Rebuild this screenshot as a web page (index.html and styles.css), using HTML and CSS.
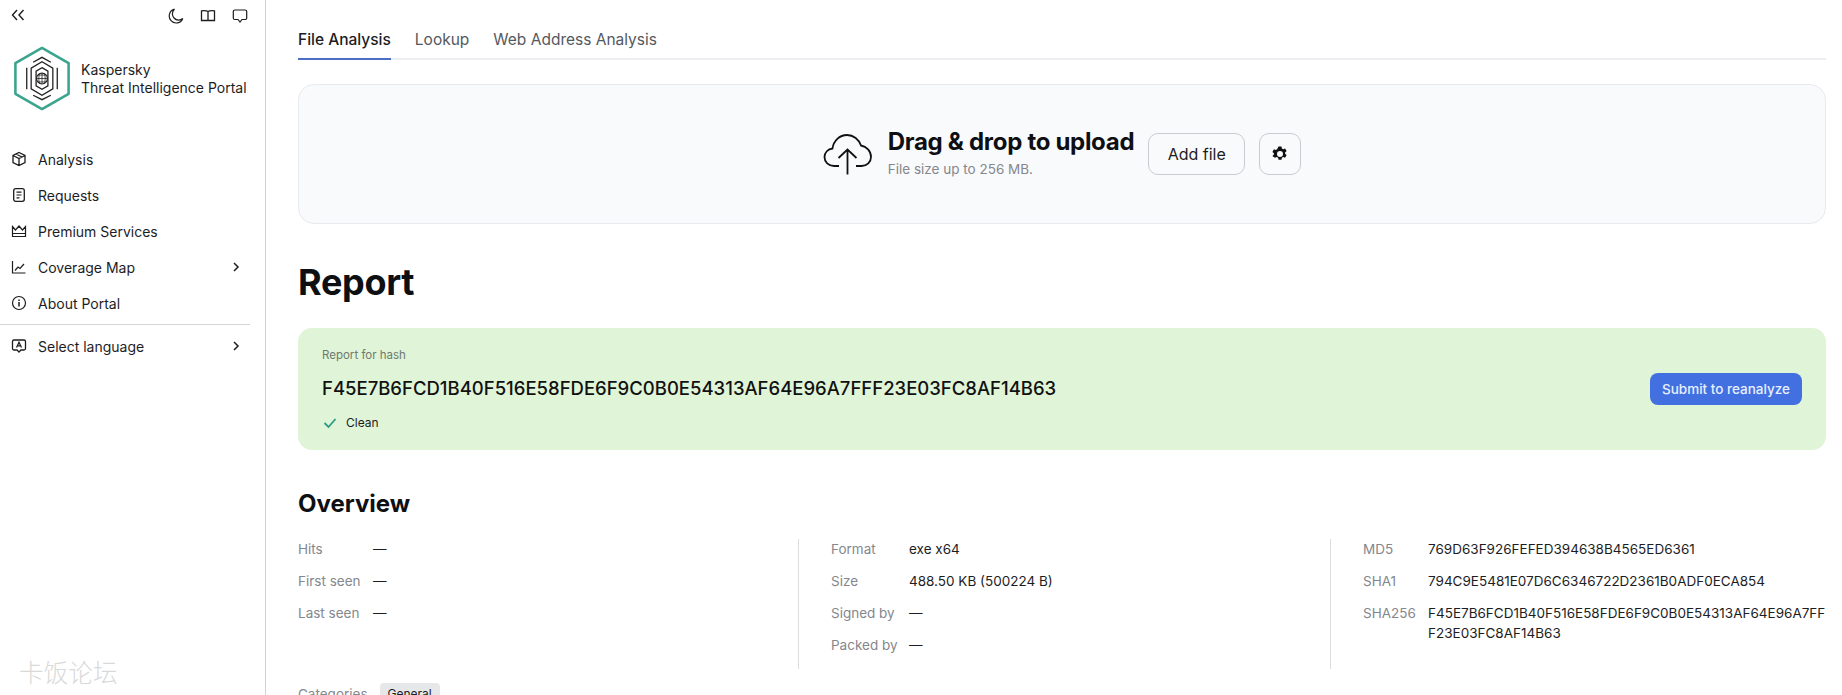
FILE: index.html
```html
<!DOCTYPE html>
<html lang="en">
<head>
<meta charset="utf-8">
<title>Kaspersky Threat Intelligence Portal</title>
<link rel="stylesheet" href="styles.css">
</head>
<body>
<div class="app">
  <aside class="sidebar">
    <div class="topbar">
      <svg class="collapse" viewBox="0 0 14 12" width="14" height="12"><path d="M6 1 1.5 6 6 11M12.5 1 8 6l4.500 5" fill="none" stroke="#1d1d1f" stroke-width="1.400"/></svg>
      <div class="top-icons">
        <svg viewBox="0 0 16 16" width="16" height="16"><path d="M6.500 1.200A7 7 0 1 0 14.800 10.500 6 6 0 0 1 6.500 1.200Z" fill="none" stroke="#1d1d1f" stroke-width="1.200"/></svg>
        <svg viewBox="0 0 16 16" width="16" height="16"><path d="M8 3.500C6.500 2.600 4 2.500 1.500 2.800V12.500H14.500V2.800C12 2.500 9.500 2.600 8 3.500ZM8 3.500V12.500" fill="none" stroke="#1d1d1f" stroke-width="1.300"/></svg>
        <svg viewBox="0 0 16 16" width="16" height="16"><path d="M2.800 2H13.200A1.500 1.500 0 0 1 14.700 3.500V10A1.500 1.500 0 0 1 13.200 11.500H10L8 14 6 11.500H2.800A1.500 1.500 0 0 1 1.300 10V3.500A1.500 1.500 0 0 1 2.800 2Z" fill="none" stroke="#1d1d1f" stroke-width="1.200"/></svg>
      </div>
    </div>
    <div class="brand">
      <svg class="logo" viewBox="0 0 60 66" width="60" height="65">
        <path d="M30 2 57 17.500V48.500L30 64 3 48.500V17.500Z" fill="none" stroke="#3aa48f" stroke-width="2.600" stroke-linejoin="round"/>
        <path d="M21 16.500 30 11.500 39 16.500M45.500 22V44M39 50 30 54.500 21 50M14.500 44V22" fill="none" stroke="#222" stroke-width="1.300"/>
        <path d="M30 16 41 22.500V43.500L30 50 19 43.500V22.500Z" fill="none" stroke="#222" stroke-width="1.300"/>
        <path d="M30 22 36 25.500V40.500L30 44 24 40.500V25.500Z" fill="none" stroke="#222" stroke-width="1.300"/>
        <circle cx="30" cy="33" r="5.500" fill="none" stroke="#222" stroke-width="1.100"/>
        <path d="M24.500 33H35.500M30 27.500V38.500M26 29.500H34M26 36.500H34M27.500 28C26.500 31 26.500 35 27.500 38M32.500 28C33.500 31 33.500 35 32.500 38" fill="none" stroke="#222" stroke-width=".8"/>
      </svg>
      <div class="brand-text"><div>Kaspersky</div><div>Threat Intelligence Portal</div></div>
    </div>
    <nav class="nav">
      <a class="nav-item">
        <svg viewBox="0 0 16 16" width="16" height="16"><path d="M8 1.500 14 4.500V11.500L8 14.500 2 11.500V4.500ZM2 4.500 8 7.500 14 4.500M8 7.500V14.500M5 3 11 6" fill="none" stroke="#1d1d1f" stroke-width="1.300"/></svg>
        <span>Analysis</span>
      </a>
      <a class="nav-item">
        <svg viewBox="0 0 16 16" width="16" height="16"><rect x="2.700" y="1.700" width="10.600" height="12.600" rx="2" fill="none" stroke="#1d1d1f" stroke-width="1.300"/><path d="M5.500 5.200H10.500M5.500 8H10.500M5.500 10.800H8.500" stroke="#1d1d1f" stroke-width="1.200"/></svg>
        <span>Requests</span>
      </a>
      <a class="nav-item">
        <svg viewBox="0 0 16 16" width="16" height="16"><path d="M1.500 3.500 4.500 7 8 3 11.500 7 14.500 3.500V13.500H1.500ZM1.500 10.500H14.500" fill="none" stroke="#1d1d1f" stroke-width="1.200"/></svg>
        <span>Premium Services</span>
      </a>
      <a class="nav-item">
        <svg viewBox="0 0 16 16" width="16" height="16"><path d="M1.500 2V14H14.500M4 11.500 7 8l2 1.500 4-4.500" fill="none" stroke="#1d1d1f" stroke-width="1.200"/></svg>
        <span>Coverage Map</span>
        <svg class="chev" viewBox="0 0 8 12" width="8" height="12"><path d="M2 2 6 6 2 10" fill="none" stroke="#1d1d1f" stroke-width="1.500"/></svg>
      </a>
      <a class="nav-item">
        <svg viewBox="0 0 16 16" width="16" height="16"><circle cx="8" cy="8" r="6.500" fill="none" stroke="#1d1d1f" stroke-width="1.200"/><path d="M8 7V11.500M8 4.500V6" stroke="#1d1d1f" stroke-width="1.500"/></svg>
        <span>About Portal</span>
      </a>
      <div class="nav-sep"></div>
      <a class="nav-item">
        <svg viewBox="0 0 16 16" width="16" height="16"><path d="M3 2H13A1.500 1.500 0 0 1 14.500 3.500V10.500A1.500 1.500 0 0 1 13 12H10L8 14 6 12H3A1.500 1.500 0 0 1 1.500 10.500V3.500A1.500 1.500 0 0 1 3 2Z" fill="none" stroke="#1d1d1f" stroke-width="1.300"/><path d="M5.500 9.500 8 4.200 10.500 9.500M6.500 7.800H9.500" fill="none" stroke="#1d1d1f" stroke-width="1.200"/></svg>
        <span>Select language</span>
        <svg class="chev" viewBox="0 0 8 12" width="8" height="12"><path d="M2 2 6 6 2 10" fill="none" stroke="#1d1d1f" stroke-width="1.500"/></svg>
      </a>
    </nav>
    <div class="watermark">卡饭论坛</div>
  </aside>
  <main class="main">
    <div class="tabs">
      <a class="tab tab-active">File Analysis</a>
      <a class="tab">Lookup</a>
      <a class="tab">Web Address Analysis</a>
    </div>
    <section class="dropzone">
      <svg class="cloud" viewBox="0 0 50 42" width="50" height="42"><path d="M16 33H11C5.500 33 1.500 29 1.500 24C1.500 19.500 5 16 9.500 15.500C10.500 8 16.500 2 24 2C30.500 2 36 6.500 38 12.500C43.500 13.500 48 18 48 24C48 29 44 33 38.500 33H33M24.500 41.500V17M15.500 25 24.500 16.500 33.500 25" fill="none" stroke="#111" stroke-width="1.800"/></svg>
      <div class="drop-text">
        <div class="drop-title">Drag &amp; drop to upload</div>
        <div class="drop-sub">File size up to 256 MB.</div>
      </div>
      <button class="btn-outline">Add file</button>
      <button class="btn-outline btn-icon">
        <svg viewBox="0 0 16 16" width="16" height="16"><path fill-rule="evenodd" d="M6.500.5h3l.4 2 1.300.7 1.900-.7 1.500 2.600-1.500 1.300v1.400l1.500 1.300-1.500 2.600-1.900-.7-1.300.7-.4 2h-3l-.4-2-1.300-.7-1.900.7L.4 9.900l1.500-1.300V7.200L.4 5.900l1.500-2.600 1.900.7 1.300-.7ZM8 5a3 3 0 1 0 0 6 3 3 0 0 0 0-6Z" fill="#111"/></svg>
      </button>
    </section>
    <h1 class="report-title">Report</h1>
    <section class="verdict">
      <div class="verdict-info">
        <div class="verdict-label">Report for hash</div>
        <div class="verdict-hash">F45E7B6FCD1B40F516E58FDE6F9C0B0E54313AF64E96A7FFF23E03FC8AF14B63</div>
        <div class="verdict-status">
          <svg viewBox="0 0 14 12" width="14" height="12"><path d="M1.500 6 5.500 10 12.500 2" fill="none" stroke="#2a9d80" stroke-width="1.800"/></svg>
          <span>Clean</span>
        </div>
      </div>
      <button class="btn-primary">Submit to reanalyze</button>
    </section>
    <h2 class="overview-title">Overview</h2>
    <section class="overview">
      <dl class="ov-col ov-a">
        <div class="ov-row"><dt>Hits</dt><dd>—</dd></div>
        <div class="ov-row"><dt>First seen</dt><dd>—</dd></div>
        <div class="ov-row"><dt>Last seen</dt><dd>—</dd></div>
      </dl>
      <dl class="ov-col ov-b">
        <div class="ov-row"><dt>Format</dt><dd>exe x64</dd></div>
        <div class="ov-row"><dt>Size</dt><dd>488.50 KB (500224 B)</dd></div>
        <div class="ov-row"><dt>Signed by</dt><dd>—</dd></div>
        <div class="ov-row"><dt>Packed by</dt><dd>—</dd></div>
      </dl>
      <dl class="ov-col ov-c">
        <div class="ov-row"><dt>MD5</dt><dd>769D63F926FEFED394638B4565ED6361</dd></div>
        <div class="ov-row"><dt>SHA1</dt><dd>794C9E5481E07D6C6346722D2361B0ADF0ECA854</dd></div>
        <div class="ov-row"><dt>SHA256</dt><dd>F45E7B6FCD1B40F516E58FDE6F9C0B0E54313AF64E96A7FFF23E03FC8AF14B63</dd></div>
      </dl>
    </section>
    <div class="categories"><span class="cat-label">Categories</span><span class="chip">General</span></div>
  </main>
</div>
</body>
</html>
```
FILE: styles.css
```css
* { box-sizing: border-box; }
html, body { margin: 0; height: 695px; overflow: hidden; background: #fff; }
body { font-family: Inter, "Noto Sans CJK SC", sans-serif; color: #1d1d1f; }
.app { display: flex; height: 695px; }
.sidebar { width: 266px; flex: none; border-right: 1px solid #cfd1d4; position: relative; padding: 6px 0 0; }
.topbar { display: flex; justify-content: space-between; align-items: center; padding: 0 17px 0 11px; height: 20px; }
.collapse { margin-top: -3px; }
.top-icons { display: flex; gap: 16px; }
.brand { display: flex; align-items: center; gap: 9px; padding: 20px 0 0 12px; }
.brand-text { font-size: 14px; line-height: 18px; color: #1d1d1f; }
.nav { margin-top: 30px; }
.nav-item { display: flex; align-items: center; height: 36px; padding: 0 25px 0 11px; font-size: 14px; gap: 11px; color: #1d1d1f; }
.nav-item span { flex: 1; }
.nav-sep { height: 1px; background: #d3d5d8; margin: 3px 15px 3px 0; }
.nav-sep + .nav-item { margin-top: 3px; }
.watermark { position: absolute; left: 19px; top: 656px; font-size: 24.500px; font-weight: 300; color: #d9d9d9; font-family: "Noto Sans CJK SC", sans-serif; line-height: 32px; letter-spacing: .2px; }

.main { flex: 1; min-width: 0; padding: 0 16px 0 32px; }
.tabs { display: flex; gap: 24px; height: 60px; padding-top: 28px; border-bottom: 2px solid #eceef1; }
.tab { font-size: 15.500px; line-height: 24px; height: 32px; color: #55585d; }
.tab-active { color: #1d1d1f; border-bottom: 2px solid #4a6fc4; font-weight: 500; }

.dropzone { margin-top: 24px; height: 140px; background: #f9fafc; border: 1px solid #e8eaee; border-radius: 16px; display: flex; align-items: center; justify-content: center; }
.cloud { margin: 0 15px 0 0; }
.drop-title { font-size: 24px; font-weight: 700; color: #0e0f12; line-height: 30px; letter-spacing: -.3px; }
.drop-sub { font-size: 13.500px; line-height: 20px; color: #84878d; margin-top: 2px; }
.drop-text { margin-right: 14px; margin-top: -2px; }
.btn-outline { font: inherit; font-size: 16px; height: 42px; width: 97px; border: 1px solid #c9cbcf; border-radius: 10px; background: transparent; color: #1d1d1f; padding: 0; }
.btn-icon { width: 42px; margin-left: 14px; display: flex; align-items: center; justify-content: center; }

.report-title { margin: 36px 0 0; font-size: 36px; line-height: 44px; font-weight: 700; color: #0e0f12; letter-spacing: -.3px; }
.verdict { margin-top: 24px; height: 122px; background: #e0f4d7; border-radius: 14px; padding: 16px 24px; display: flex; align-items: center; justify-content: space-between; }
.verdict-label { font-size: 11.500px; line-height: 16px; color: #6d7a6d; }
.verdict-hash { font-size: 18.500px; line-height: 24px; font-weight: 500; margin-top: 13px; color: #111; }
.verdict-status { display: flex; align-items: center; gap: 9px; font-size: 12px; line-height: 16px; margin-top: 15px; margin-left: 1px; color: #1d1d1f; }
.btn-primary { font: inherit; font-size: 13.500px; font-weight: 500; height: 32px; padding: 0 12px; background: #4270e0; color: #e7efff; border: 0; border-radius: 8px; }

.overview-title { margin: 38px 0 0; font-size: 24px; line-height: 32px; font-weight: 700; color: #0e0f12; }
.overview { display: grid; grid-template-columns: 500px 532px 1fr; margin-top: 19px; height: 130px; }
.ov-col { margin: 0; display: flex; flex-direction: column; gap: 8px; padding-top: 0; }
.ov-b, .ov-c { border-left: 1px solid #dcdde0; padding-left: 32px; }
.ov-row { display: flex; font-size: 13.500px; line-height: 20px; min-height: 24px; align-items: flex-start; padding-top: 0; }
.ov-row dt { color: #84878d; flex: none; }
.ov-row dd { margin: 0; color: #1d1d1f; word-break: break-all; }
.ov-a dt { width: 75px; }
.ov-b dt { width: 78px; }
.ov-c dt { width: 65px; }
.categories { display: flex; align-items: center; gap: 12px; margin-top: 14px; font-size: 13.500px; }
.cat-label { color: #84878d; }
.chip { background: #e6e7e9; border-radius: 4px; padding: 2px 8px; font-size: 12px; line-height: 18px; }
```
